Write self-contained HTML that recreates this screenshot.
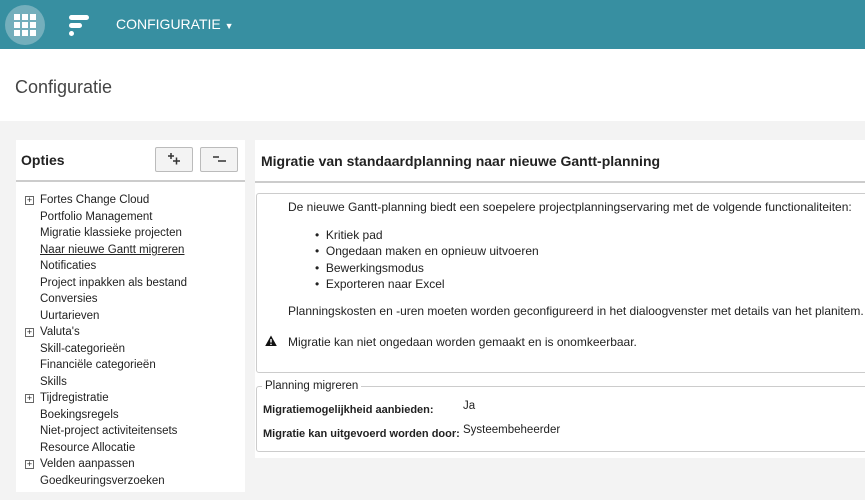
<!DOCTYPE html>
<html><head><style>
*{margin:0;padding:0;box-sizing:border-box}
body{width:865px;height:500px;background:#f3f3f3;font-family:"Liberation Sans",Arial,sans-serif;color:#222;position:relative;overflow:hidden}
.top{position:absolute;left:0;top:0;width:865px;height:49px;background:#378fa1}
.circ{position:absolute;left:5px;top:5px;width:40px;height:40px;border-radius:50%;background:#74afbc}
.grid{position:absolute;left:9px;top:9px;width:22px;height:22px;display:grid;grid-template-columns:repeat(3,6px);grid-auto-rows:6px;gap:2px}
.grid i{background:#fff;width:6px;height:6px;display:block}
.hdr{position:absolute;left:0;top:49px;width:865px;height:72px;background:#fff}
.abs{position:absolute}
.lp{position:absolute;left:16px;top:140px;width:229px;height:352px;background:#fff}
.rp{position:absolute;left:255px;top:140px;width:610px;height:318px;background:#fff}
.item{position:absolute;left:24px;font-size:11.5px;white-space:nowrap}
.plus{position:absolute;left:1px;top:2px;width:9px;height:9px;border:1px solid #666;font-size:9px;line-height:7px;text-align:center}
.btn{position:absolute;top:7px;width:38px;height:25px;border:1px solid #bbb;background:#f3f3f3;border-radius:2px}
</style></head><body>
<div class="top">
<div class="circ"><div class="grid"><i></i><i></i><i></i><i></i><i></i><i></i><i></i><i></i><i></i></div></div>
<div class="abs" style="left:69px;top:15px;width:20px;height:5px;background:#fff;border-radius:3px"></div>
<div class="abs" style="left:69px;top:23px;width:13px;height:5px;background:#fff;border-radius:3px"></div>
<div class="abs" style="left:69px;top:31px;width:5px;height:5px;background:#fff;border-radius:3px"></div>
<div class="abs" style="left:116px;top:16px;color:#fff;font-size:14px">CONFIGURATIE <span style="font-size:9px">▼</span></div>
</div>
<div class="hdr"><div class="abs" style="left:15px;top:28px;font-size:18px;color:#444">Configuratie</div></div>
<div class="lp">
<div class="abs" style="left:5px;top:12px;font-size:14px;font-weight:bold">Opties</div>
<div class="btn" style="left:139px"><svg width="38" height="25" style="position:absolute;left:-1px;top:-1px"><path d="M13 9h6M16 6v6M18 14h7M21.5 10.5v7" stroke="#333" stroke-width="1.5"/></svg></div>
<div class="btn" style="left:184px"><svg width="38" height="25" style="position:absolute;left:-1px;top:-1px"><path d="M13 10h6M18 14h8" stroke="#333" stroke-width="1.5"/></svg></div>
<div class="abs" style="left:0;top:40px;width:229px;height:2px;background:#ccc"></div>
</div>
<div style="position:absolute;left:0;top:0">
<div class="item" style="top:194px"><span class="plus">+</span><span style="margin-left:16px">Fortes Change Cloud</span></div>
<div class="item" style="top:211px;left:40px">Portfolio Management</div>
<div class="item" style="top:227px;left:40px">Migratie klassieke projecten</div>
<div class="item" style="top:244px;left:40px;text-decoration:underline">Naar nieuwe Gantt migreren</div>
<div class="item" style="top:260px;left:40px">Notificaties</div>
<div class="item" style="top:277px;left:40px">Project inpakken als bestand</div>
<div class="item" style="top:293px;left:40px">Conversies</div>
<div class="item" style="top:310px;left:40px">Uurtarieven</div>
<div class="item" style="top:326px"><span class="plus">+</span><span style="margin-left:16px">Valuta's</span></div>
<div class="item" style="top:343px;left:40px">Skill-categorieën</div>
<div class="item" style="top:359px;left:40px">Financiële categorieën</div>
<div class="item" style="top:376px;left:40px">Skills</div>
<div class="item" style="top:392px"><span class="plus">+</span><span style="margin-left:16px">Tijdregistratie</span></div>
<div class="item" style="top:409px;left:40px">Boekingsregels</div>
<div class="item" style="top:425px;left:40px">Niet-project activiteitensets</div>
<div class="item" style="top:442px;left:40px">Resource Allocatie</div>
<div class="item" style="top:458px"><span class="plus">+</span><span style="margin-left:16px">Velden aanpassen</span></div>
<div class="item" style="top:475px;left:40px">Goedkeuringsverzoeken</div>
</div>
<div class="rp">
<div class="abs" style="left:6px;top:13px;font-size:14px;font-weight:bold">Migratie van standaardplanning naar nieuwe Gantt-planning</div>
<div class="abs" style="left:0;top:41px;width:610px;height:2px;background:#ccc"></div>
<div class="abs" style="left:1px;top:53px;width:620px;height:180px;border:1px solid #ccc;border-radius:3px;font-size:12px">
<div class="abs" style="left:31px;top:6px;white-space:nowrap">De nieuwe Gantt-planning biedt een soepelere projectplanningservaring met de volgende functionaliteiten:</div>
<div class="abs" style="left:58px;top:33px;line-height:16.3px">• &nbsp;Kritiek pad<br>• &nbsp;Ongedaan maken en opnieuw uitvoeren<br>• &nbsp;Bewerkingsmodus<br>• &nbsp;Exporteren naar Excel</div>
<div class="abs" style="left:31px;top:110px;white-space:nowrap">Planningskosten en -uren moeten worden geconfigureerd in het dialoogvenster met details van het planitem.</div>
<svg class="abs" style="left:8px;top:141px" width="12" height="12"><path d="M6 0.5L11.8 11H0.2Z" fill="#111"/><path d="M6 4v3.5M6 8.8v1.2" stroke="#fff" stroke-width="1.4"/></svg>
<div class="abs" style="left:31px;top:141px;white-space:nowrap">Migratie kan niet ongedaan worden gemaakt en is onomkeerbaar.</div>
</div>
<div class="abs" style="left:1px;top:246px;width:620px;height:66px;border:1px solid #ccc;border-radius:3px"></div>
<div class="abs" style="left:7px;top:240px;background:#fff;padding:0 3px;font-size:11.5px">Planning migreren</div>
<div class="abs" style="left:8px;top:264px;font-size:11px;font-weight:bold">Migratiemogelijkheid aanbieden:</div>
<div class="abs" style="left:208px;top:260px;font-size:11.5px">Ja</div>
<div class="abs" style="left:8px;top:288px;font-size:11px;font-weight:bold">Migratie kan uitgevoerd worden door:</div>
<div class="abs" style="left:208px;top:284px;font-size:11.5px">Systeembeheerder</div>
</div>
</body></html>
